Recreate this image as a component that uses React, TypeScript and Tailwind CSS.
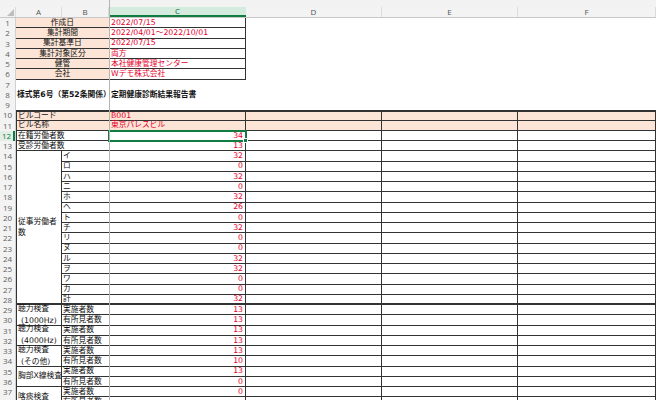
import type { ReactNode } from "react";

const ROW = "h-[10.25px] shrink-0";
const LINE = "border-[#333]";
const RED = "text-[#e5002b]";

const info: [string, string][] = [
  ["作成日", "2022/07/15"],
  ["集計期間", "2022/04/01～2022/10/01"],
  ["集計基準日", "2022/07/15"],
  ["集計対象区分", "両方"],
  ["健管", "本社健康管理センター"],
  ["会社", "Wデモ株式会社"],
];

const workers: [string, number][] = [
  ["イ", 32],
  ["ロ", 0],
  ["ハ", 32],
  ["ニ", 0],
  ["ホ", 32],
  ["ヘ", 26],
  ["ト", 0],
  ["チ", 32],
  ["リ", 0],
  ["ヌ", 0],
  ["ル", 32],
  ["ヲ", 32],
  ["ワ", 0],
  ["カ", 0],
  ["計", 32],
];

const exams: { label: string[]; rows: [string, number | string][] }[] = [
  { label: ["聴力検査", "(1000Hz)"], rows: [["実施者数", 13], ["有所見者数", 13]] },
  { label: ["聴力検査", "(4000Hz)"], rows: [["実施者数", 13], ["有所見者数", 13]] },
  { label: ["聴力検査", "(その他)"], rows: [["実施者数", 13], ["有所見者数", 10]] },
  { label: ["胸部X線検査"], rows: [["実施者数", 13], ["有所見者数", 0]] },
  { label: ["喀痰検査"], rows: [["実施者数", 0], ["有所見者数", ""]] },
];

function Blanks({ last = false }: { last?: boolean }) {
  const b = last ? "border-b-2" : "border-b";
  return (
    <>
      <div className={`w-[136px] border-r ${b} ${LINE}`} />
      <div className={`w-[136px] border-r ${b} ${LINE}`} />
      <div className={`w-[138px] border-r ${b} ${LINE}`} />
    </>
  );
}

function Num({ v, last = false }: { v: ReactNode; last?: boolean }) {
  return (
    <div
      className={`w-[137px] border-r ${last ? "border-b-2" : "border-b"} ${LINE} flex items-center justify-end pr-[2px] ${RED}`}
    >
      {v}
    </div>
  );
}

function RowHeader() {
  const nums = Array.from({ length: 38 }, (_, i) => i + 1);
  return (
    <div className="w-[16px] shrink-0 flex flex-col bg-[#f3f3f3] border-r border-[#d0d0d0] font-['Open_Sans',sans-serif] text-[8px]">
      {nums.map((n) =>
        n === 12 ? (
          <div
            key={n}
            className={`${ROW} flex items-center justify-center text-[#107c41] bg-[#e2efe7] border-r-2 border-[#107c41]`}
          >
            {n}
          </div>
        ) : (
          <div key={n} className={`${ROW} flex items-center justify-center text-[#5f5f5f]`}>
            {n}
          </div>
        )
      )}
    </div>
  );
}

function ColHeader() {
  const cell = "h-full flex items-center justify-center border-r border-[#dcdcdc] text-[#555]";
  return (
    <div className="flex h-[11px] font-['Open_Sans',sans-serif] text-[8px] border-b border-[#c8c8c8]">
      <div className="w-[16px] h-full border-r border-[#dcdcdc] flex items-end justify-end p-[1px]">
        <svg width="7" height="7" viewBox="0 0 7 7">
          <polygon points="7,0 7,7 0,7" fill="#bdbdbd" />
        </svg>
      </div>
      <div className={`w-[46px] ${cell}`}>A</div>
      <div className={`w-[47px] ${cell}`}>B</div>
      <div className="w-[137px] h-full flex items-center justify-center bg-[#d3ecdd] text-[#0e6b3a] border-b-2 border-[#107c41]">
        C
      </div>
      <div className={`w-[136px] ${cell}`}>D</div>
      <div className={`w-[136px] ${cell}`}>E</div>
      <div className={`w-[138px] ${cell}`}>F</div>
    </div>
  );
}

function Sheet() {
  return (
    <div className="flex flex-col w-[640px] text-[7.75px] leading-none text-[#111]">
      {info.map(([label, value]) => (
        <div key={label} className={`${ROW} flex`}>
          <div className={`w-[93px] bg-[#fce4d6] border-b ${LINE} flex items-center justify-center`}>
            {label}
          </div>
          <div className={`w-[137px] border-b border-r ${LINE} flex items-center pl-[2px] ${RED}`}>
            {value}
          </div>
        </div>
      ))}

      <div className={ROW} />
      <div className={`${ROW} flex items-center font-bold whitespace-nowrap`}>
        <div className="w-[93px] pl-[1px]">様式第6号（第52条関係）</div>
        <div className="pl-[2px]">定期健康診断結果報告書</div>
      </div>
      <div className={ROW} />

      <div className={`${ROW} flex bg-[#fce4d6] border-t-2 ${LINE}`}>
        <div className={`w-[93px] border-l border-b ${LINE} flex items-center pl-[1px]`}>ビルコード</div>
        <div className={`w-[137px] border-r border-b ${LINE} flex items-center pl-[2px] ${RED}`}>B001</div>
        <Blanks />
      </div>
      <div className={`${ROW} flex bg-[#fce4d6]`}>
        <div className={`w-[93px] border-l border-b ${LINE} flex items-center pl-[1px]`}>ビル名称</div>
        <div className={`w-[137px] border-r border-b ${LINE} flex items-center pl-[2px] ${RED}`}>
          東京パレスビル
        </div>
        <Blanks />
      </div>

      <div className={`${ROW} flex`}>
        <div className={`w-[93px] border-l border-b ${LINE} flex items-center pl-[1px]`}>在籍労働者数</div>
        <div
          className={`relative w-[137px] border-r border-b ${LINE} flex items-center justify-end pr-[2px] ${RED} outline-2 outline-[#107c41] -outline-offset-1`}
        >
          34
          <span className="absolute -right-[3px] -bottom-[3px] w-[5px] h-[5px] bg-[#107c41] border border-white" />
        </div>
        <Blanks />
      </div>
      <div className={`${ROW} flex`}>
        <div className={`w-[93px] border-l border-b ${LINE} flex items-center pl-[1px]`}>受診労働者数</div>
        <Num v={13} />
        <Blanks />
      </div>

      <div className="flex">
        <div
          className={`w-[46px] border-l border-r border-b-2 ${LINE} flex flex-col justify-center pl-[1px] leading-[11px]`}
        >
          <span>従事労働者</span>
          <span>数</span>
        </div>
        <div className="flex flex-col">
          {workers.map(([k, v], i) => {
            const last = i === workers.length - 1;
            return (
              <div key={k} className={`${ROW} flex`}>
                <div
                  className={`w-[47px] ${last ? "border-b-2" : "border-b"} ${LINE} flex items-center pl-[1px]`}
                >
                  {k}
                </div>
                <Num v={v} last={last} />
                <Blanks last={last} />
              </div>
            );
          })}
        </div>
      </div>

      {exams.map((ex, gi) => (
        <div key={gi} className="flex h-[20.5px] shrink-0">
          <div
            className={`w-[46px] h-full border-l border-r border-b ${LINE} flex flex-col justify-center pl-[1px] leading-[12px] whitespace-nowrap`}
          >
            {ex.label.map((t, i) => (
              <span key={t} className={i === 1 ? "pl-[3px]" : ""}>
                {t}
              </span>
            ))}
          </div>
          <div className="flex flex-col">
            {ex.rows.map(([k, v]) => (
              <div key={k} className={`${ROW} flex`}>
                <div className={`w-[47px] border-b ${LINE} flex items-center pl-[1px] whitespace-nowrap`}>
                  {k}
                </div>
                <Num v={v} />
                <Blanks />
              </div>
            ))}
          </div>
        </div>
      ))}
    </div>
  );
}

export default function App() {
  return (
    <div className="relative w-[656px] h-[400px] overflow-hidden bg-white font-['DejaVu_Sans','Noto_Sans_CJK_JP',sans-serif]">
      <div className="h-[7px] bg-[#f2f2f2]" />
      <div className="bg-[#f3f3f3]">
        <ColHeader />
      </div>
      <div className="flex">
        <RowHeader />
        <Sheet />
      </div>
      <div className="absolute left-[109px] top-0 bottom-0 w-px bg-[#b4b4b4]" />
    </div>
  );
}
